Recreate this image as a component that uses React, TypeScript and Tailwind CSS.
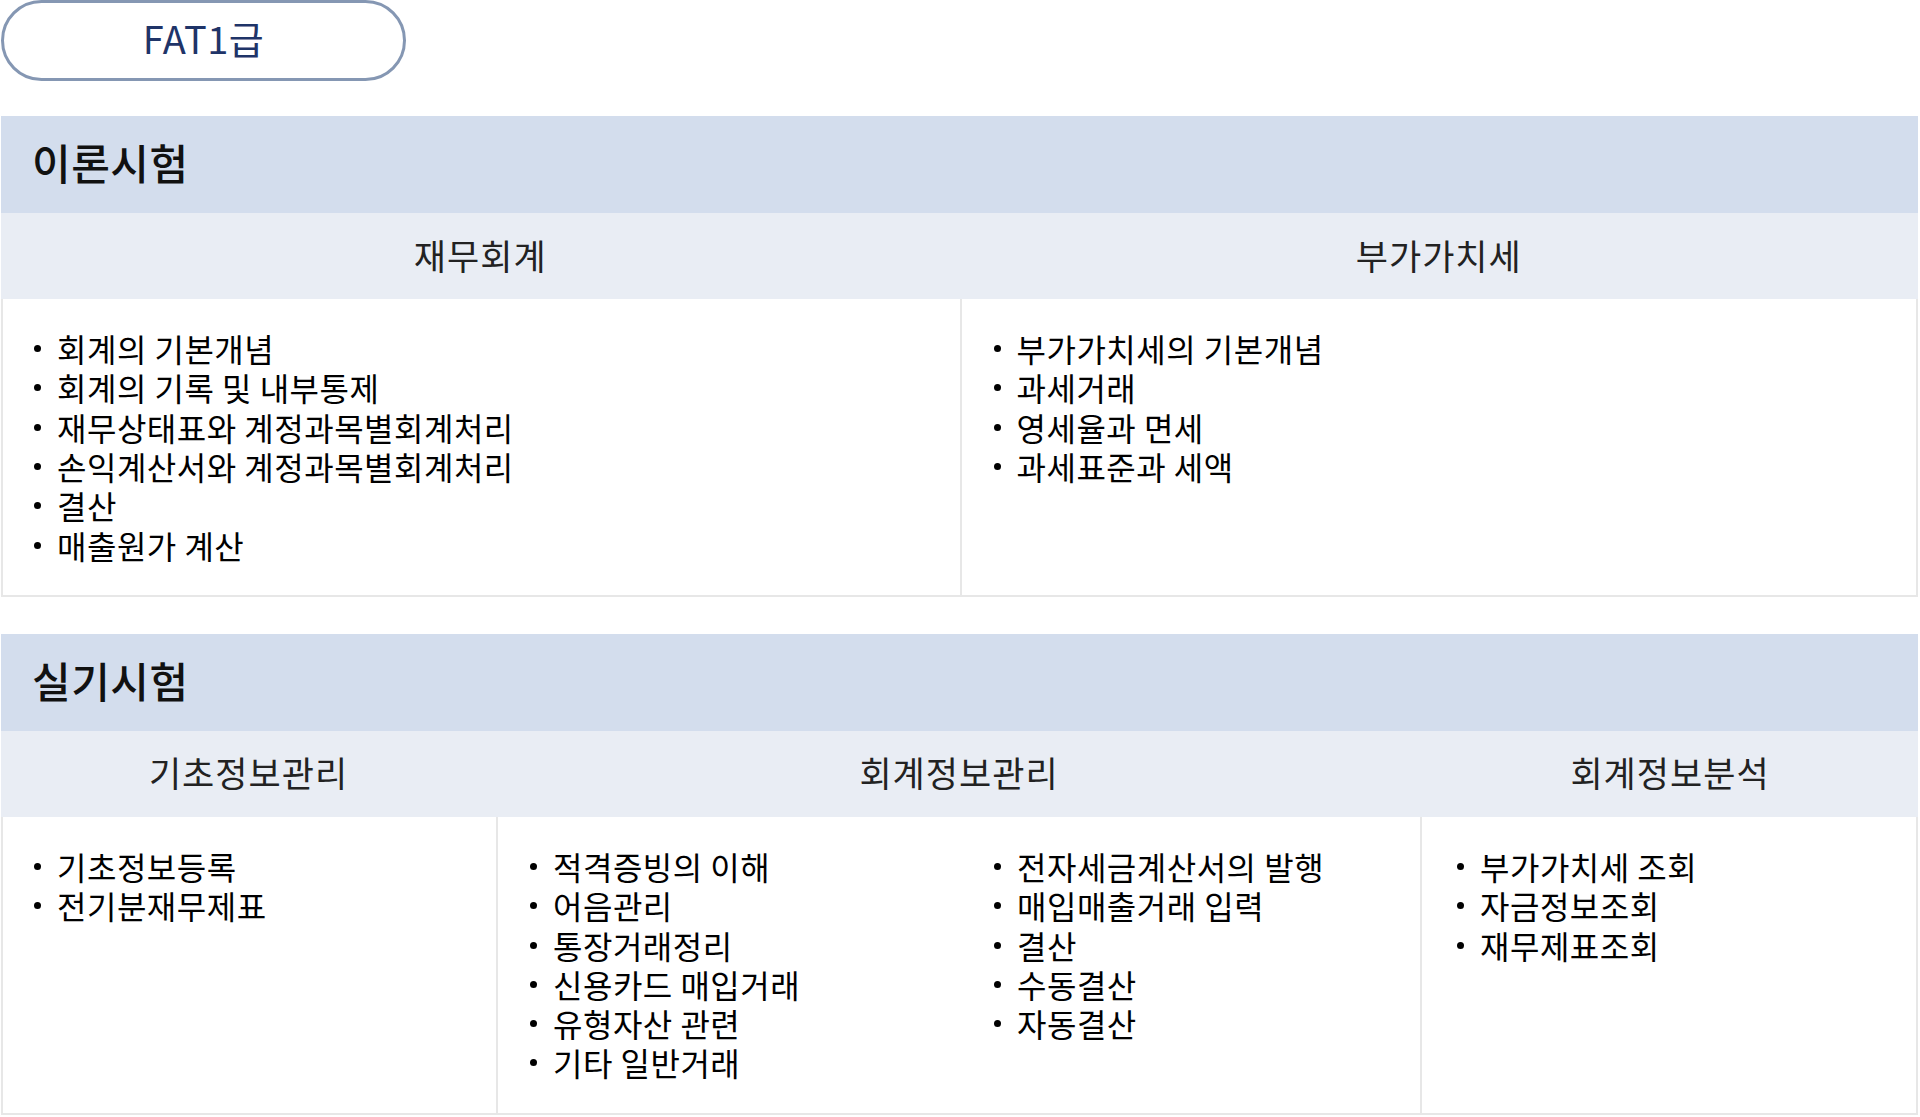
import React from 'react';

const theory = {
  title: '이론시험',
  cols: [
    {
      name: '재무회계',
      items: [
        '회계의 기본개념',
        '회계의 기록 및 내부통제',
        '재무상태표와 계정과목별회계처리',
        '손익계산서와 계정과목별회계처리',
        '결산',
        '매출원가 계산',
      ],
    },
    {
      name: '부가가치세',
      items: ['부가가치세의 기본개념', '과세거래', '영세율과 면세', '과세표준과 세액'],
    },
  ],
};

const practiceLeft = ['기초정보등록', '전기분재무제표'];
const practiceMidA = ['적격증빙의 이해', '어음관리', '통장거래정리', '신용카드 매입거래', '유형자산 관련', '기타 일반거래'];
const practiceMidB = ['전자세금계산서의 발행', '매입매출거래 입력', '결산', '수동결산', '자동결산'];
const practiceRight = ['부가가치세 조회', '자금정보조회', '재무제표조회'];

function BulletList({ items }: { items: string[] }) {
  return (
    <ul className="flex flex-col">
      {items.map((item) => (
        <li key={item} className="flex items-center gap-[16px] h-[39.3px] text-[32px] leading-[39px] tracking-[0.5px] text-black">
          <span className="w-[7px] h-[7px] rounded-full bg-black shrink-0" />
          <span className="whitespace-nowrap">{item}</span>
        </li>
      ))}
    </ul>
  );
}

function SectionHeader({ title }: { title: string }) {
  return (
    <div className="h-[97px] bg-[#d3dded] flex items-center pl-[31px] pb-[5px]">
      <h2 className="text-[42px] leading-none font-medium text-[#111] tracking-[0.5px]">{title}</h2>
    </div>
  );
}

export default function App() {
  return (
    <div
      className="min-h-screen bg-white pl-[1px] pr-[2px]"
      style={{ fontFamily: '"Noto Sans CJK KR", "Noto Sans", sans-serif' }}
    >
      {/* Level tab */}
      <div className="w-[405px] h-[81px] rounded-full border-[3px] border-[#8597b3] flex items-center justify-center pb-[6px]">
        <span className="text-[38px] text-[#1f3468] tracking-[0.5px]">FAT1급</span>
      </div>

      {/* 이론시험 */}
      <section className="mt-[35px]">
        <SectionHeader title={theory.title} />
        <div className="grid grid-cols-2 h-[86px] bg-[#e9edf4]">
          {theory.cols.map((c) => (
            <div key={c.name} className="flex items-center justify-center pb-[4px] text-[35px] leading-none tracking-[1px] text-[#222]">
              {c.name}
            </div>
          ))}
        </div>
        <div className="grid grid-cols-2 border-x-2 border-b-2 border-[#e7e7e7]">
          <div className="pl-[31px] py-[30px]">
            <BulletList items={theory.cols[0].items} />
          </div>
          <div className="pl-8 py-[30px] border-l-2 border-[#e7e7e7]">
            <BulletList items={theory.cols[1].items} />
          </div>
        </div>
      </section>

      {/* 실기시험 */}
      <section className="mt-[37px]">
        <SectionHeader title="실기시험" />
        <div className="flex h-[86px] bg-[#e9edf4] pb-[4px] text-[35px] leading-none tracking-[1px] text-[#222]">
          <div className="w-[495px] flex items-center justify-center">기초정보관리</div>
          <div className="flex-1 flex items-center justify-center">회계정보관리</div>
          <div className="w-[496px] flex items-center justify-center">회계정보분석</div>
        </div>
        <div className="flex border-x-2 border-b-2 border-[#e7e7e7]">
          <div className="w-[493px] pl-[31px] py-[30px]">
            <BulletList items={practiceLeft} />
          </div>
          <div className="flex-1 flex pl-8 py-[30px] border-l-2 border-[#e7e7e7]">
            <div className="w-[464px]">
              <BulletList items={practiceMidA} />
            </div>
            <div className="flex-1">
              <BulletList items={practiceMidB} />
            </div>
          </div>
          <div className="w-[496px] pl-[35px] py-[30px] border-l-2 border-[#e7e7e7]">
            <BulletList items={practiceRight} />
          </div>
        </div>
      </section>
    </div>
  );
}
